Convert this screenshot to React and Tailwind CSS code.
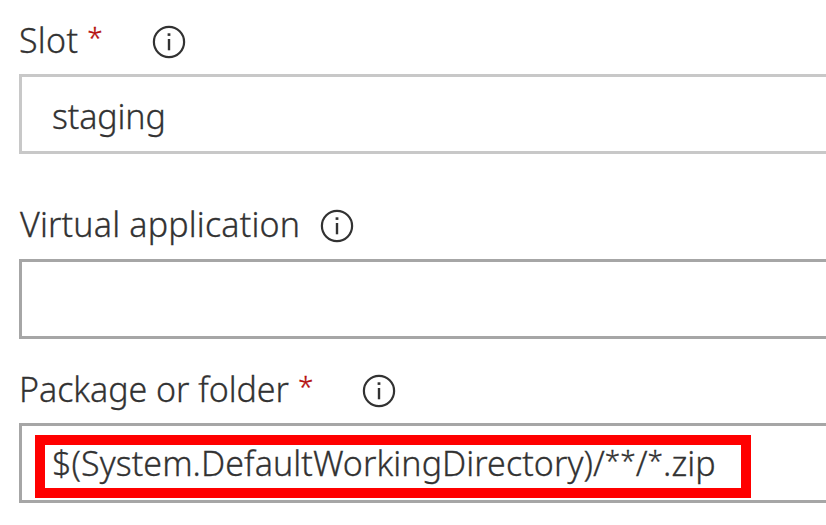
function InfoIcon() {
  return (
    <svg className="size-[34px] shrink-0" viewBox="0 0 34 34" fill="none" aria-hidden="true">
      <circle cx="17" cy="17" r="15.1" stroke="#323232" strokeWidth="2.2" />
      <rect x="15.6" y="8.3" width="2.8" height="2.6" fill="#323232" />
      <rect x="15.8" y="14" width="2.4" height="11.3" fill="#323232" />
    </svg>
  );
}

function Star({ className = "" }) {
  return <span className={`relative -top-[5px] text-[28px] leading-none tracking-[0px] ${className}`}>*</span>;
}

function Label({ children, required, className = "" }) {
  return (
    <div className="h-10 whitespace-nowrap leading-10">
      <span className={className}>{children}</span>
      {required && <Star className="ml-[9px] text-[#b50e0e]" />}
    </div>
  );
}

export default function App() {
  return (
    <main className="h-[525px] w-full overflow-hidden bg-white pt-[20px] pl-[19px] font-['Noto_Sans',sans-serif] text-[34px] font-[350] text-[#323232] [-webkit-text-stroke:0.3px]">
      <section className="h-[184px]">
        <div className="flex items-center">
          <div className="w-[133px]">
            <Label required className="tracking-[0.3px]">Slot</Label>
          </div>
          <div className="pt-[4px]"><InfoIcon /></div>
        </div>
        <div className="mt-[14px] h-20 border-[3px] border-r-0 border-[#c8c8c8] pt-[19px] pl-[30px] leading-10">
          <span className="tracking-[-0.15px]">staging</span>
        </div>
      </section>

      <section className="h-[165px]">
        <div className="flex items-center">
          <div className="w-[301px] pl-px">
            <Label className="tracking-[0.17px]">Virtual application</Label>
          </div>
          <div className="pt-[4px]"><InfoIcon /></div>
        </div>
        <div className="mt-[15px] h-20 border-[3px] border-r-0 border-[#a6a6a6]" />
      </section>

      <section>
        <div className="flex items-center">
          <div className="w-[343px]">
            <Label required className="tracking-[-0.05px]">Package or folder</Label>
          </div>
          <div className="pt-[4px]"><InfoIcon /></div>
        </div>
        <div className="mt-[14px] h-20 border-[3px] border-r-0 border-[#a6a6a6] pt-[9px] pl-[13px]">
          <div className="h-[63px] w-[716px] border-[10px] border-[#ff0000] pl-[7px] leading-10">
            <span className="relative -top-[2px] whitespace-nowrap tracking-[0.07px]">
              $(System.DefaultWorkingDirectory)/<Star /><Star />/<Star />.zip
            </span>
          </div>
        </div>
      </section>
    </main>
  );
}
